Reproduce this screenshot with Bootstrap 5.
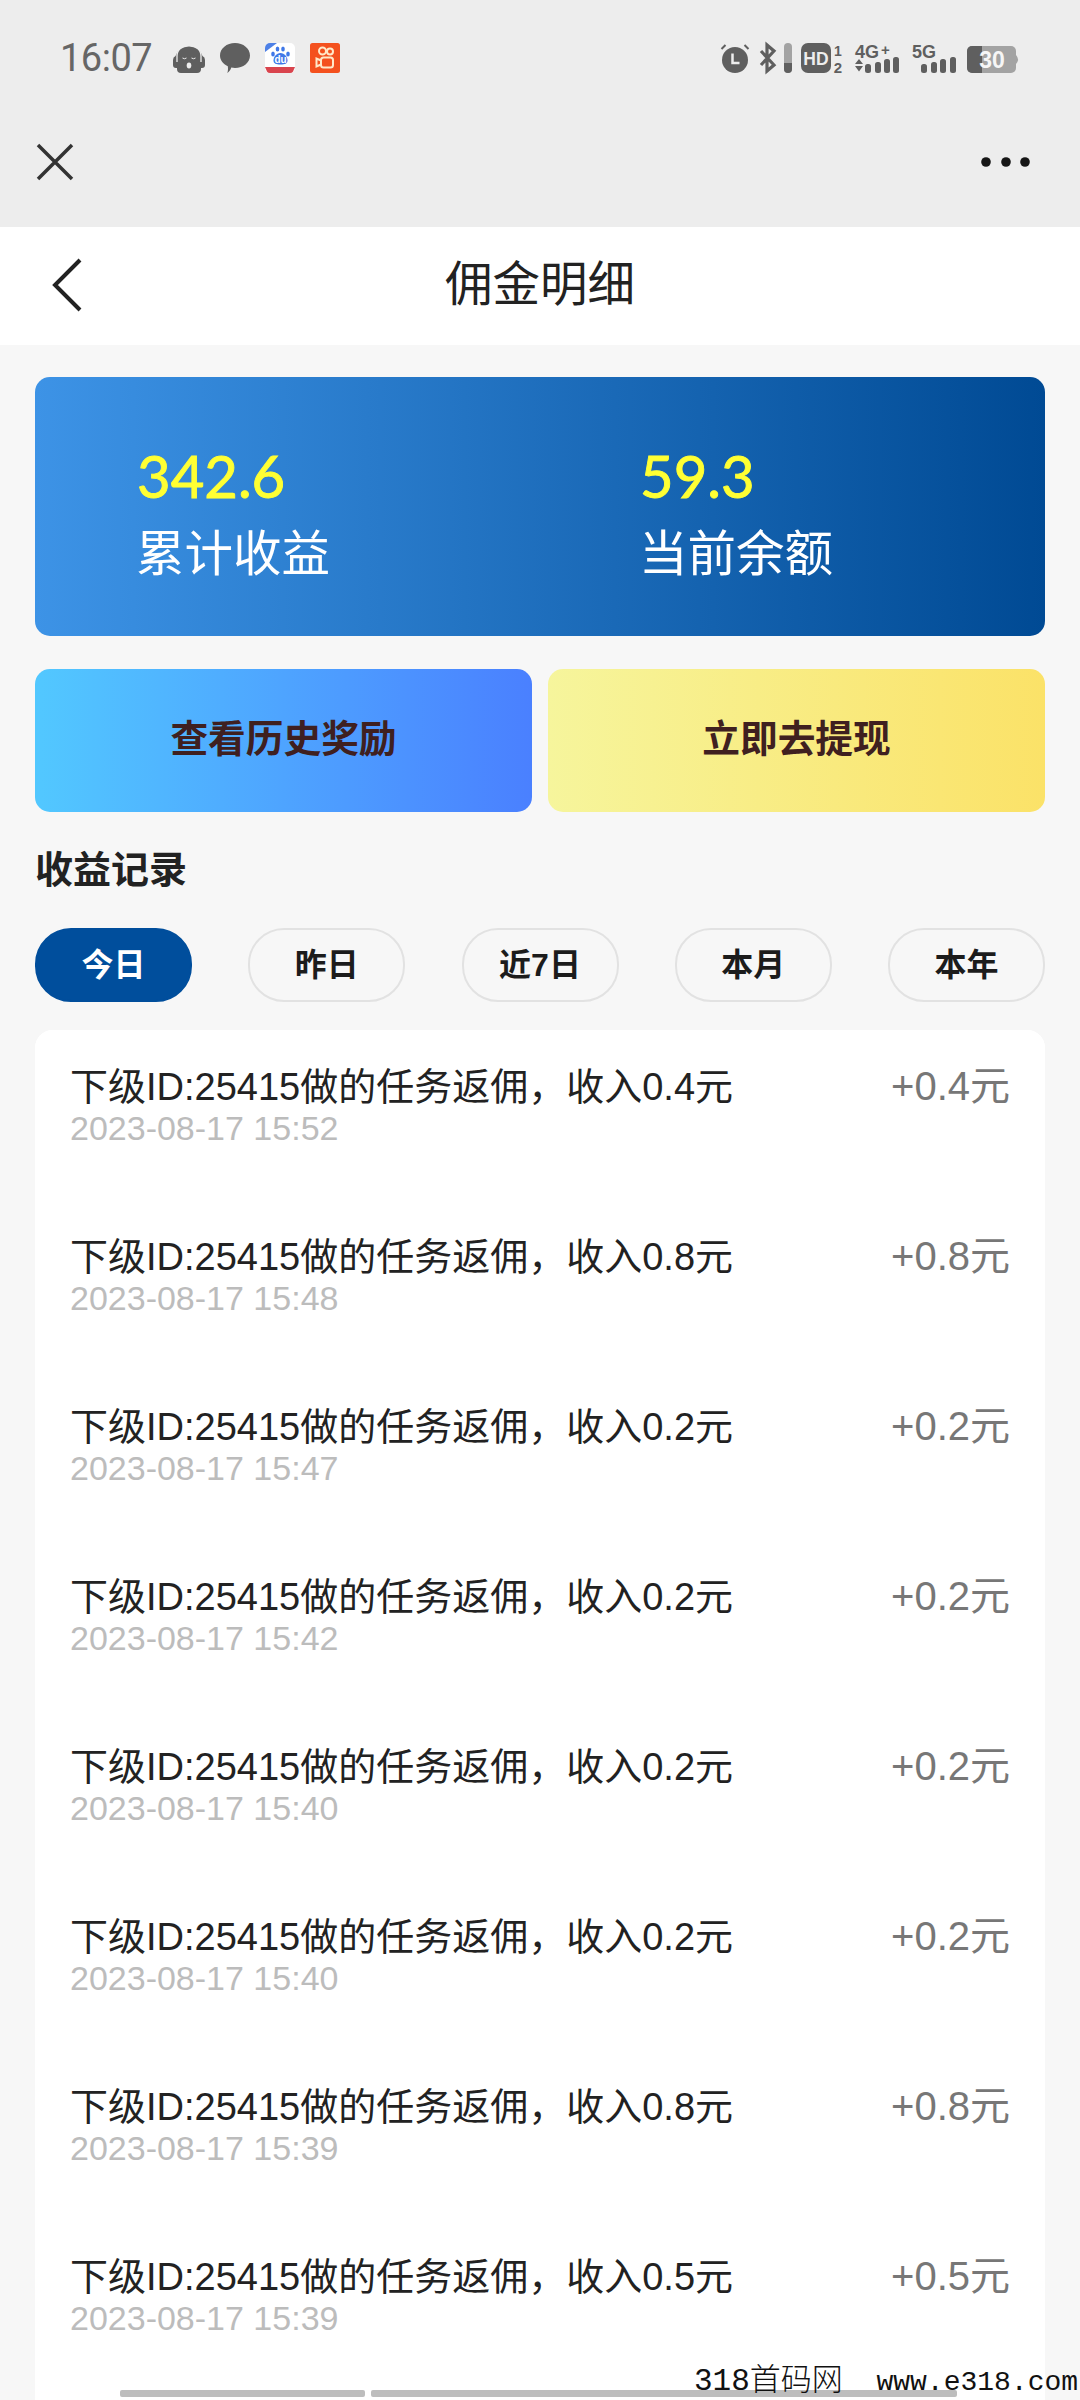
<!DOCTYPE html>
<html lang="zh-CN">
<head>
    <meta charset="UTF-8">
    <meta name="viewport" content="width=device-width, initial-scale=1.0">
    <title>佣金明细</title>
    <link href="https://cdn.jsdelivr.net/npm/bootstrap@5.3.0/dist/css/bootstrap.min.css" rel="stylesheet">
    <style>
        :root {
            --cjk-font: "Liberation Sans", "Noto Sans CJK SC", sans-serif;
        }

        html, body {
            height: 2400px;
            overflow: hidden;
        }

        body {
            background-color: #f7f7f7;
            font-family: var(--cjk-font);
            position: relative;
        }

        /* barra del sistema + barra del webview */
        .top-shell {
            background-color: #ededed;
            height: 227px;
            padding-top: 36px;
        }

        .status-row {
            height: 44px;
        }

        .status-left {
            padding-left: 60px;
            gap: 22px;
            color: #666;
        }

        .status-time {
            font-family: Roboto, "Liberation Sans", sans-serif;
            font-size: 38px;
            line-height: 44px;
            width: 91px;
            letter-spacing: -0.5px;
        }

        .status-apps {
            gap: 15px;
        }

        .status-right {
            padding-right: 60px;
        }

        .status-right svg {
            display: block;
        }

        .web-bar {
            padding: 63px 50px 0 36px;
        }

        .more-dots {
            gap: 9.5px;
        }

        .page-head {
            background-color: #fff;
            height: 118px;
            position: relative;
        }

        .page-head h1 {
            font-size: 47.5px;
            font-weight: 400;
            color: #222;
            margin: 0 0 4px;
        }

        .back-arrow {
            position: absolute;
            left: 52px;
            top: 31px;
        }

        .page-body {
            padding: 32px 35px 0;
        }

        .hero-panel {
            background: linear-gradient(90deg, #3d93e6, #004a94);
            border: 0;
            border-radius: 15px;
            height: 259px;
            padding-top: 71px;
        }

        .hero-col {
            padding-left: 102px;
        }

        .hero-col + .hero-col {
            padding-left: 100px;
        }

        .hero-num {
            font-family: Lato, "Liberation Sans", sans-serif;
            font-size: 58px;
            line-height: 56px;
            color: #ffff33;
            -webkit-text-stroke: 0.9px #ffff33;
        }

        .hero-label {
            font-size: 48.5px;
            line-height: 58px;
            margin-top: 21px;
            margin-left: -1px;
            color: #fff;
        }

        .action-row {
            gap: 16px;
            margin-top: 33px;
        }

        .action-btn {
            flex: 1 1 0;
            height: 143px;
            border: 0;
            border-radius: 15px;
            font-size: 37.7px;
            font-weight: 700;
            color: #3f2020;
            padding: 0 0 3px;
        }

        .action-blue {
            background: linear-gradient(90deg, #52c8ff, #4a80ff);
        }

        .action-yellow {
            background: linear-gradient(90deg, #f6f59c, #fbe268);
        }

        .section-title {
            font-size: 38px;
            font-weight: 700;
            line-height: 46px;
            color: #222;
            margin: 35px 0 35px;
        }

        .pill-btn {
            width: 157px;
            height: 74px;
            border: 2px solid #e2e2e2;
            border-radius: 36px;
            background-color: transparent;
            color: #1c1c1c;
            font-size: 32px;
            font-weight: 700;
            padding: 0;
        }

        .pill-btn.pill-on {
            background-color: #004e9c;
            border-color: #004e9c;
            color: #fff;
        }

        .record-list {
            margin-top: 28px;
            padding-bottom: 40px;
            background-color: #fff;
            border-radius: 18px 18px 0 0;
        }

        .record-row {
            height: 170px;
            padding: 34px 35px 0 35px;
            border: 0;
        }

        .record-title {
            font-size: 38px;
            line-height: 46px;
            color: #222;
        }

        .record-time {
            font-size: 34px;
            line-height: 36px;
            color: #bcbcbc;
        }

        .record-amount {
            font-size: 40px;
            line-height: 44px;
            color: #777;
        }

        /* barras inferiores y marca de agua van encima del contenido */
        .scroll-bar {
            position: absolute;
            top: 2390px;
            height: 7px;
            background-color: #bdbdbd;
            border-radius: 2px;
        }

        .scroll-a {
            left: 120px;
            width: 245px;
        }

        .scroll-b {
            left: 371px;
            width: 586px;
        }

        .watermark {
            position: absolute;
            left: 694px;
            top: 2364px;
            white-space: nowrap;
            font-family: "Liberation Mono", "Noto Sans CJK SC", monospace;
            font-size: 28px;
            line-height: 36px;
            color: #111;
        }

        .watermark span {
            font-size: 31px;
            font-weight: 300;
        }
    </style>
</head>
<body>
    <div class="top-shell">
        <div class="status-row d-flex justify-content-between align-items-center">
            <div class="status-left d-flex align-items-center">
                <span class="status-time">16:07</span>
                <div class="status-apps d-flex align-items-center">
                    <!-- auriculares -->
                    <svg width="32" height="30" viewBox="0 0 32 30">
                        <path d="M0 17q0-3 2.500-4A14 13 0 0 1 29.500 13q2.500 1 2.500 4v5q0 3-3 3h-1v1a4 4 0 0 1-4 4H8a4 4 0 0 1-4-4v-1H3q-3 0-3-3z" fill="#5f5f5f"/>
                        <path d="M4 19v-6a12 11 0 0 1 24 0v6" fill="none" stroke="#ededed" stroke-width="1.300"/>
                        <path d="M9.500 15q2 1.500 4 0M18.500 15q2 1.500 4 0" fill="none" stroke="#ededed" stroke-width="1"/>
                        <ellipse cx="16" cy="22.500" rx="2.300" ry="3" fill="#ededed"/>
                    </svg>
                    <!-- burbuja -->
                    <svg width="30" height="30" viewBox="0 0 30 30">
                        <path d="M15 0c8.300 0 15 5.500 15 12.500S23.300 25 15 25c-1.300 0-2.500-.1-3.700-.4-.7 2.300-2.300 4.700-4 5.400.7-2 .9-4.200.5-6.800C3 21 0 17 0 12.500 0 5.500 6.700 0 15 0z" fill="#5f5f5f"/>
                    </svg>
                    <!-- baidu -->
                    <svg width="30" height="30" viewBox="0 0 30 30">
                        <rect width="30" height="30" rx="5" fill="#fff"/>
                        <path d="M0 9V5a5 5 0 0 1 5-5h7z" fill="#4d80e6"/>
                        <ellipse cx="8" cy="11" rx="1.800" ry="2.500" fill="#3f78e8"/>
                        <ellipse cx="12.500" cy="6" rx="1.800" ry="2.500" fill="#3f78e8"/>
                        <ellipse cx="18" cy="6" rx="1.800" ry="2.500" fill="#3f78e8"/>
                        <ellipse cx="23" cy="11" rx="1.800" ry="2.500" fill="#3f78e8"/>
                        <path d="M15.500 10c4 0 7 4 7 7.500 0 3-2.500 4-7 4s-7-1-7-4c0-3.500 3-7.500 7-7.500z" fill="#3f78e8"/>
                        <text x="15.500" y="20" text-anchor="middle" font-family="Liberation Sans" font-size="10" font-weight="700" fill="#fff">du</text>
                        <path d="M0 24h30l-2 4.500q-1 1.500-3 1.500H5q-2 0-3-1.500z" fill="#d9444e"/>
                    </svg>
                    <!-- camara naranja -->
                    <svg width="30" height="30" viewBox="0 0 30 30">
                        <rect width="30" height="30" rx="2.500" fill="#f4511e"/>
                        <g fill="none" stroke="#ffe9c9" stroke-width="2">
                            <circle cx="12.500" cy="8" r="3.500"/>
                            <circle cx="20" cy="8.500" r="3"/>
                            <rect x="11" y="14.500" width="12" height="10" rx="2.500"/>
                            <path d="M11 17.500l-4.500-2v8l4.500-2"/>
                        </g>
                    </svg>
                </div>
            </div>
            <div class="status-right d-flex align-items-center">
                <svg width="300" height="44" viewBox="0 -7 300 44">
                    <!-- alarma -->
                    <circle cx="15" cy="17" r="13" fill="#5f5f5f"/>
                    <path d="M12.500 10.500v9.500h7" fill="none" stroke="#ededed" stroke-width="2.500"/>
                    <path d="M1.500 6l4-4M28.500 6l-4-4" stroke="#5f5f5f" stroke-width="2"/>
                    <!-- bluetooth -->
                    <path d="M41 8l13 14-7 6V2l7 6-13 14" fill="none" stroke="#5f5f5f" stroke-width="3.200"/>
                    <rect x="64" y="0" width="8" height="30" rx="4" fill="#a3a3a3"/>
                    <path d="M64 20h8v6a4 4 0 0 1-8 0z" fill="#5f5f5f"/>
                    <!-- HD -->
                    <rect x="81" y="0" width="30" height="30" rx="7" fill="#5f5f5f"/>
                    <text x="96" y="21.500" text-anchor="middle" font-family="Liberation Sans" font-size="17.500" font-weight="700" fill="#ededed">HD</text>
                    <text x="118" y="12.500" text-anchor="middle" font-family="Liberation Sans" font-size="14" font-weight="700" fill="#5f5f5f">1</text>
                    <text x="118" y="30" text-anchor="middle" font-family="Liberation Sans" font-size="15" font-weight="700" fill="#5f5f5f">2</text>
                    <!-- 4G+ -->
                    <text x="135" y="15" font-family="Liberation Sans" font-size="18" font-weight="700" fill="#5f5f5f">4G</text>
                    <text x="161" y="12" font-family="Liberation Sans" font-size="15" font-weight="700" fill="#5f5f5f">+</text>
                    <path d="M135 21l4-5 4 5zM135 23h8l-4 5.500z" fill="#5f5f5f"/>
                    <rect x="145" y="21" width="6" height="9" rx="2.500" fill="#5f5f5f"/>
                    <rect x="155" y="19" width="6" height="11" rx="2.500" fill="#5f5f5f"/>
                    <rect x="164" y="16" width="6" height="14" rx="2.500" fill="#5f5f5f"/>
                    <rect x="173" y="14" width="6" height="16" rx="2.500" fill="#5f5f5f"/>
                    <!-- 5G -->
                    <text x="192" y="15" font-family="Liberation Sans" font-size="18" font-weight="700" fill="#5f5f5f">5G</text>
                    <rect x="201" y="21" width="6" height="9" rx="2.500" fill="#5f5f5f"/>
                    <rect x="211" y="19" width="6" height="11" rx="2.500" fill="#5f5f5f"/>
                    <rect x="220" y="16" width="6" height="14" rx="2.500" fill="#5f5f5f"/>
                    <rect x="230" y="14" width="6" height="16" rx="2.500" fill="#5f5f5f"/>
                    <!-- bateria -->
                    <rect x="247" y="3" width="49" height="27" rx="5" fill="#a3a3a3"/>
                    <path d="M252 3h10v27h-10a5 5 0 0 1-5-5V8a5 5 0 0 1 5-5z" fill="#5f5f5f"/>
                    <path d="M296 12q4 4.500 0 9z" fill="#a3a3a3"/>
                    <text x="272" y="25" text-anchor="middle" font-family="Liberation Sans" font-size="23" font-weight="700" fill="#f6f6f6">30</text>
                </svg>
            </div>
        </div>
        <div class="web-bar d-flex justify-content-between align-items-center">
            <svg width="38" height="38" viewBox="0 0 38 38">
                <path d="M2 2l34 34M36 2L2 36" fill="none" stroke="#333" stroke-width="3.500"/>
            </svg>
            <div class="more-dots d-flex">
                <svg width="10" height="10"><circle cx="5" cy="5" r="4.800" fill="#161616"/></svg>
                <svg width="10" height="10"><circle cx="5" cy="5" r="4.800" fill="#161616"/></svg>
                <svg width="10" height="10"><circle cx="5" cy="5" r="4.800" fill="#161616"/></svg>
            </div>
        </div>
    </div>

    <header class="page-head d-flex justify-content-center align-items-center">
        <svg class="back-arrow" width="30" height="54" viewBox="0 0 30 54">
            <path d="M28 2L3 27l25 25" fill="none" stroke="#222" stroke-width="4"/>
        </svg>
        <h1>佣金明细</h1>
    </header>

    <main class="page-body">
        <div class="card hero-panel">
            <div class="row g-0">
                <div class="col-6 hero-col">
                    <div class="hero-num">342.6</div>
                    <div class="hero-label">累计收益</div>
                </div>
                <div class="col-6 hero-col">
                    <div class="hero-num">59.3</div>
                    <div class="hero-label">当前余额</div>
                </div>
            </div>
        </div>

        <div class="action-row d-flex">
            <button type="button" class="btn action-btn action-blue">查看历史奖励</button>
            <button type="button" class="btn action-btn action-yellow">立即去提现</button>
        </div>

        <h2 class="section-title">收益记录</h2>

        <div class="d-flex justify-content-between">
            <button type="button" class="btn pill-btn pill-on">今日</button>
            <button type="button" class="btn pill-btn">昨日</button>
            <button type="button" class="btn pill-btn">近7日</button>
            <button type="button" class="btn pill-btn">本月</button>
            <button type="button" class="btn pill-btn">本年</button>
        </div>

        <ul class="list-group record-list" id="recordList"></ul>
    </main>

    <div class="scroll-bar scroll-a"></div>
    <div class="scroll-bar scroll-b"></div>
    <div class="watermark"><span>318首码网</span>&nbsp;&nbsp;www.e318.com</div>

    <script src="https://cdn.jsdelivr.net/npm/bootstrap@5.3.0/dist/js/bootstrap.bundle.min.js"></script>
    <script>
        // Registros de ingresos
        const registros = [
            { monto: "0.4", hora: "15:52" },
            { monto: "0.8", hora: "15:48" },
            { monto: "0.2", hora: "15:47" },
            { monto: "0.2", hora: "15:42" },
            { monto: "0.2", hora: "15:40" },
            { monto: "0.2", hora: "15:40" },
            { monto: "0.8", hora: "15:39" },
            { monto: "0.5", hora: "15:39" }
        ];

        const lista = document.getElementById("recordList");
        registros.forEach(r => {
            lista.innerHTML += `
                <li class="list-group-item record-row d-flex justify-content-between align-items-start">
                    <div>
                        <div class="record-title">下级ID:25415做的任务返佣，收入${r.monto}元</div>
                        <div class="record-time">2023-08-17 ${r.hora}</div>
                    </div>
                    <div class="record-amount">+${r.monto}元</div>
                </li>`;
        });
    </script>
</body>
</html>
